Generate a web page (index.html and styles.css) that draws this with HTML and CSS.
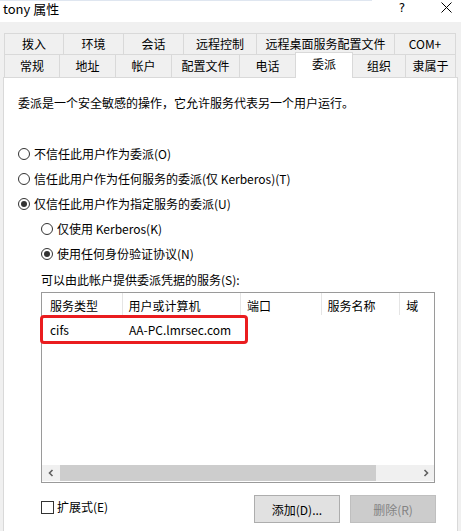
FILE: index.html
```html
<!DOCTYPE html>
<html lang="zh-CN">
<head>
<meta charset="utf-8">
<title>tony 属性</title>
<link rel="stylesheet" href="styles.css">
</head>
<body>
<div class="window">
  <div class="titlebar">
    <span class="title">tony 属性</span>
    <span class="help">?</span>
    <svg class="close" width="11" height="11" viewBox="0 0 11 11"><path d="M0.5 0.5 L10.5 10.5 M10.5 0.5 L0.5 10.5" stroke="#000" stroke-width="1" fill="none"/></svg>
  </div>
  <div class="dialog">
    <div class="tabs tabs-row1">
      <div class="tab">拨入</div>
      <div class="tab">环境</div>
      <div class="tab">会话</div>
      <div class="tab">远程控制</div>
      <div class="tab">远程桌面服务配置文件</div>
      <div class="tab last">COM+</div>
    </div>
    <div class="tabs tabs-row2">
      <div class="tab">常规</div>
      <div class="tab">地址</div>
      <div class="tab">帐户</div>
      <div class="tab">配置文件</div>
      <div class="tab">电话</div>
      <div class="tab active">委派</div>
      <div class="tab">组织</div>
      <div class="tab last">隶属于</div>
    </div>
    <div class="panel">
      <p class="desc">委派是一个安全敏感的操作，它允许服务代表另一个用户运行。</p>
      <div class="options">
        <div class="option"><span class="radio"></span><span>不信任此用户作为委派(O)</span></div>
        <div class="option"><span class="radio"></span><span>信任此用户作为任何服务的委派(仅 Kerberos)(T)</span></div>
        <div class="option"><span class="radio checked"></span><span>仅信任此用户作为指定服务的委派(U)</span></div>
        <div class="option sub"><span class="radio"></span><span>仅使用 Kerberos(K)</span></div>
        <div class="option sub"><span class="radio checked"></span><span>使用任何身份验证协议(N)</span></div>
      </div>
      <div class="indent">
        <p class="list-label">可以由此帐户提供委派凭据的服务(S):</p>
        <div class="listview">
          <div class="lv-header">
            <span class="col c1">服务类型</span>
            <span class="col c2">用户或计算机</span>
            <span class="col c3">端口</span>
            <span class="col c4">服务名称</span>
            <span class="col c5">域</span>
          </div>
          <div class="lv-row">
            <span class="col c1">cifs</span>
            <span class="col c2">AA-PC.lmrsec.com</span>
          </div>
          <div class="highlight"></div>
          <div class="hscroll">
            <span class="arrow">
              <svg width="8" height="8" viewBox="0 0 8 8"><path d="M5.5 1 L2.5 4 L5.5 7" stroke="#606060" stroke-width="1.6" fill="none"/></svg>
            </span>
            <div class="track"><div class="thumb"></div></div>
            <span class="arrow">
              <svg width="8" height="8" viewBox="0 0 8 8"><path d="M2.5 1 L5.5 4 L2.5 7" stroke="#606060" stroke-width="1.6" fill="none"/></svg>
            </span>
          </div>
        </div>
        <div class="bottom">
          <label class="check"><span class="box"></span><span>扩展式(E)</span></label>
          <div class="buttons">
            <button class="btn">添加(D)...</button>
            <button class="btn disabled">删除(R)</button>
          </div>
        </div>
      </div>
    </div>
  </div>
</div>
</body>
</html>
```

FILE: styles.css
```css
* { box-sizing: border-box; }
html, body {
  margin: 0;
  padding: 0;
  width: 461px;
  height: 531px;
  overflow: hidden;
  background: #f0f0f0;
  font-family: "Noto Sans CJK SC", "Segoe UI", sans-serif;
  font-size: 12px;
  color: #000;
}
p { margin: 0; }

.window { width: 461px; height: 531px; }

.titlebar {
  height: 22px;
  padding-top: 1px;
  background: linear-gradient(#dfe6f0, #dfe6f0) no-repeat 0 0 / 372px 1px, #fff;
  display: flex;
  align-items: flex-start;
}
.title {
  padding-left: 3px;
  font-size: 13px;
  line-height: 15px;
}
.help {
  margin-left: auto;
  margin-right: 36px;
  font-family: "DejaVu Sans", sans-serif;
  font-size: 12px;
  line-height: 15px;
}
.close {
  margin-right: 9px;
  margin-top: 1px;
}

.dialog {
  padding: 11px 4px 0 3px;
}

.tabs {
  display: grid;
  margin-left: 1px;
  width: 452px;
}
.tabs-row1 {
  grid-template-columns: 59px 60px 60px 73px 138px 62px;
  height: 21px;
}
.tabs-row2 {
  grid-template-columns: 55px 56px 56px 68px 56px 57px 53px 51px;
  height: 23px;
}
.tab {
  display: flex;
  align-items: center;
  justify-content: center;
  border-top: 1px solid #d9d9d9;
  border-left: 1px solid #d9d9d9;
  background: #f0f0f0;
  white-space: nowrap;
  line-height: 14px;
}
.tab.last { border-right: 1px solid #d9d9d9; }
.tab.active {
  background: #fff;
  border-right: 1px solid #d9d9d9;
  margin-top: -2px;
  margin-bottom: -1px;
  margin-right: -1px;
  padding-bottom: 4px;
  position: relative;
  z-index: 2;
}

.panel {
  width: 455px;
  height: 460px;
  background: #fff;
  border: 1px solid #d9d9d9;
}

.desc {
  margin: 17px 0 0 14px;
  line-height: 16px;
}

.options {
  margin-top: 30px;
  padding-left: 14px;
}
.option {
  height: 25px;
  display: flex;
  align-items: center;
  gap: 4px;
  line-height: 16px;
}
.option.sub { padding-left: 23px; }

.radio {
  width: 12px;
  height: 12px;
  border: 1px solid #333;
  border-radius: 50%;
  background: #fff;
  display: flex;
  align-items: center;
  justify-content: center;
  flex: none;
}
.radio.checked::after {
  content: "";
  width: 6px;
  height: 6px;
  border-radius: 50%;
  background: #333;
}

.indent { padding-left: 37px; }
.list-label {
  margin-top: 6px;
  line-height: 16px;
}

.listview {
  position: relative;
  margin-top: 4px;
  width: 394px;
  height: 191px;
  border: 1px solid #9a9a9a;
  background: #fff;
  display: flex;
  flex-direction: column;
}
.lv-header {
  display: flex;
  height: 22px;
  align-items: stretch;
}
.lv-header .col {
  border-right: 1px solid #e5e5e5;
  display: flex;
  align-items: center;
  padding-top: 3px;
}
.col {
  padding-left: 6px;
  white-space: nowrap;
  line-height: 16px;
}
.col.c1 { width: 81px; padding-left: 8px; }
.col.c2 { width: 119px; }
.col.c3 { width: 81px; }
.col.c4 { width: 79px; }
.lv-header .col.c5 { width: 34px; border-right: none; }

.lv-row {
  display: flex;
  margin-top: 7px;
  height: 16px;
}

.highlight {
  position: absolute;
  left: -2px;
  top: 22px;
  width: 208px;
  height: 29px;
  border: 3px solid #ea1c1f;
  border-radius: 4px;
}

.hscroll {
  margin-top: auto;
  margin-bottom: 1px;
  height: 16px;
  display: flex;
  background: #f0f0f0;
}
.arrow {
  width: 17px;
  display: flex;
  align-items: center;
  justify-content: center;
  flex: none;
}
.track {
  flex: 1;
  display: flex;
  align-items: stretch;
}
.thumb {
  margin-left: 1px;
  width: 316px;
  background: #cdcdcd;
}

.bottom {
  margin-top: 12px;
  width: 394px;
  display: flex;
  align-items: flex-start;
}
.check {
  display: flex;
  align-items: center;
  gap: 3px;
  margin-top: 4px;
  line-height: 16px;
}
.box {
  width: 13px;
  height: 13px;
  border: 1px solid #333;
  background: #fff;
}
.buttons {
  margin-left: auto;
  display: flex;
  gap: 10px;
  margin-right: -1px;
}
.btn {
  width: 86px;
  height: 28px;
  font-family: inherit;
  font-size: 12px;
  background: #e1e1e1;
  border: 1px solid #adadad;
  color: #000;
  padding: 0;
  margin: 0;
}
.btn.disabled {
  background: #cccccc;
  border-color: #bfbfbf;
  color: #838383;
}
```
